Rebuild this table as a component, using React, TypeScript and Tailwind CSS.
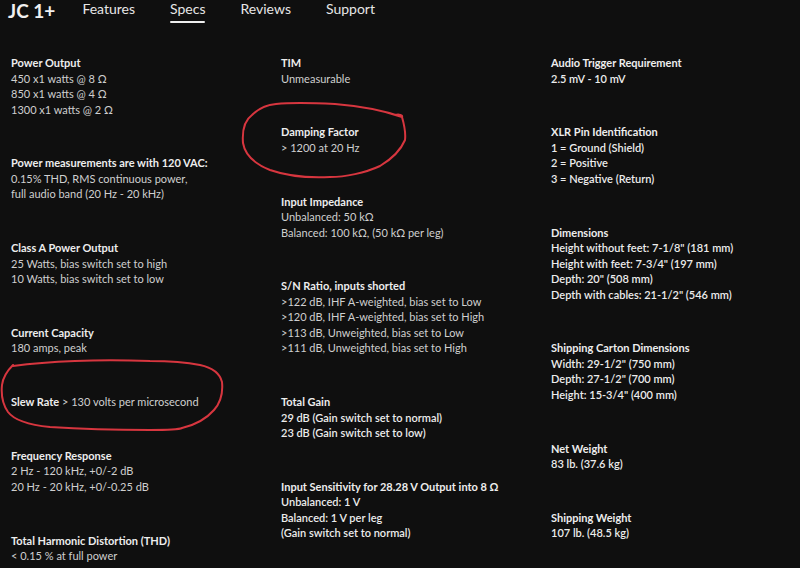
import React from "react";

type Sec = { title: React.ReactNode; lines: string[]; strong?: boolean; inline?: string };

const col1: Sec[] = [
  { title: "Power Output", lines: ["450 x1 watts @ 8 Ω", "850 x1 watts @ 4 Ω", "1300 x1 watts @ 2 Ω"] },
  { title: "Power measurements are with 120 VAC:", lines: ["0.15% THD, RMS continuous power,", "full audio band (20 Hz - 20 kHz)"] },
  { title: "Class A Power Output", lines: ["25 Watts, bias switch set to high", "10 Watts, bias switch set to low"] },
  { title: "Current Capacity", lines: ["180 amps, peak"] },
  { title: "Slew Rate", lines: [], inline: " > 130 volts per microsecond" },
  { title: "Frequency Response", lines: ["2 Hz - 120 kHz, +0/-2 dB", "20 Hz - 20 kHz, +0/-0.25 dB"] },
  { title: "Total Harmonic Distortion (THD)", lines: ["< 0.15 % at full power"] },
];

const col2: Sec[] = [
  { title: "TIM", lines: ["Unmeasurable"] },
  { title: "Damping Factor", lines: ["> 1200 at 20 Hz"] },
  { title: "Input Impedance", lines: ["Unbalanced: 50 kΩ", "Balanced: 100 kΩ, (50 kΩ per leg)"] },
  {
    title: "S/N Ratio, inputs shorted",
    lines: [
      ">122 dB, IHF A-weighted, bias set to Low",
      ">120 dB, IHF A-weighted, bias set to High",
      ">113 dB, Unweighted, bias set to Low",
      ">111 dB, Unweighted, bias set to High",
    ],
  },
  { title: "Total Gain", strong: true, lines: ["29 dB (Gain switch set to normal)", "23 dB (Gain switch set to low)"] },
  {
    title: "Input Sensitivity for 28.28 V Output into 8 Ω",
    strong: true,
    lines: ["Unbalanced: 1 V", "Balanced: 1 V per leg", "(Gain switch set to normal)"],
  },
];

const col3: Sec[] = [
  { title: "Audio Trigger Requirement", strong: true, lines: ["2.5 mV - 10 mV"] },
  { title: "XLR Pin Identification", strong: true, lines: ["1 = Ground (Shield)", "2 = Positive", "3 = Negative (Return)"] },
  {
    title: "Dimensions",
    strong: true,
    lines: ['Height without feet: 7-1/8" (181 mm)', 'Height with feet: 7-3/4" (197 mm)', 'Depth: 20" (508 mm)', 'Depth with cables: 21-1/2" (546 mm)'],
  },
  {
    title: "Shipping Carton Dimensions",
    strong: true,
    lines: ['Width: 29-1/2" (750 mm)', 'Depth: 27-1/2" (700 mm)', 'Height: 15-3/4" (400 mm)'],
  },
  { title: "Net Weight", strong: true, lines: ["83 lb. (37.6 kg)"] },
  { title: "Shipping Weight", strong: true, lines: ["107 lb. (48.5 kg)"] },
];

function Section({ s }: { s: Sec }) {
  return (
    <div className="mb-[38.3px]">
      <div>
        <span className="font-bold text-[#ededed]">{s.title}</span>
        {s.inline && <span className="text-[#cfcfcf]">{s.inline}</span>}
      </div>
      {s.lines.map((l, i) => (
        <div key={i} className={s.strong ? "font-semibold text-[#ececec]" : "text-[#cfcfcf]"}>
          {l}
        </div>
      ))}
    </div>
  );
}

function Column({ secs }: { secs: Sec[] }) {
  return (
    <div className="flex flex-col">
      {secs.map((s, i) => (
        <Section key={i} s={s} />
      ))}
    </div>
  );
}

export default function App() {
  return (
    <div
      className="relative w-[800px] h-[568px] overflow-hidden bg-[#0f0f0f] text-[#d8d8d8]"
      style={{ fontFamily: "Lato, 'Open Sans', sans-serif" }}
    >
      <header className="flex items-start h-[55px] pl-[8px] pt-[2px]">
        <div className="text-[19px] leading-[17px] font-bold text-[#f0f0f0]">JC 1+</div>
        <nav className="flex text-[14px] leading-[14px] text-[#e6e6e6] ml-[27px] gap-[35px]">
          <span>Features</span>
          <span className="flex flex-col items-start">
            <span>Specs</span>
            <span className="mt-[5px] h-[2px] w-[35px] bg-[#eeeeee] rounded-full" />
          </span>
          <span>Reviews</span>
          <span>Support</span>
        </nav>
      </header>
      <main className="grid grid-cols-[270px_270px_260px] pl-[11px] text-[11px] leading-[15.5px]">
        <Column secs={col1} />
        <Column secs={col2} />
        <Column secs={col3} />
      </main>
      <svg className="absolute inset-0 pointer-events-none" width="800" height="568" viewBox="0 0 800 568">
        <path
          d="M395 115 C399 114 403 115 402 117 C404 124 406 132 405 140 C400 152 390 160 380 166 C365 173 345 177 330 177 C310 178 290 177 270 170 C255 164 245 155 243 143 C242 130 245 120 252 115 C258 109 266 105 276 104 C295 102 315 103 335 104 C360 106 385 111 402 117"
          fill="none"
          stroke="#d7363f"
          strokeWidth="2"
          strokeLinecap="round"
        />
        <path
          d="M13 365 C8 370 3 377 2 385 C1 395 3 405 8 412 C14 420 30 425 50 427 C80 429 120 430 150 430 C165 430 178 430 182 428 C195 425 207 418 214 410 C221 402 223 392 222 382 C220 374 214 368 200 365 C185 362 170 361 150 361 C120 360 100 360 75 361 C50 362 28 364 13 366"
          fill="none"
          stroke="#d7363f"
          strokeWidth="2"
          strokeLinecap="round"
        />
      </svg>
    </div>
  );
}
